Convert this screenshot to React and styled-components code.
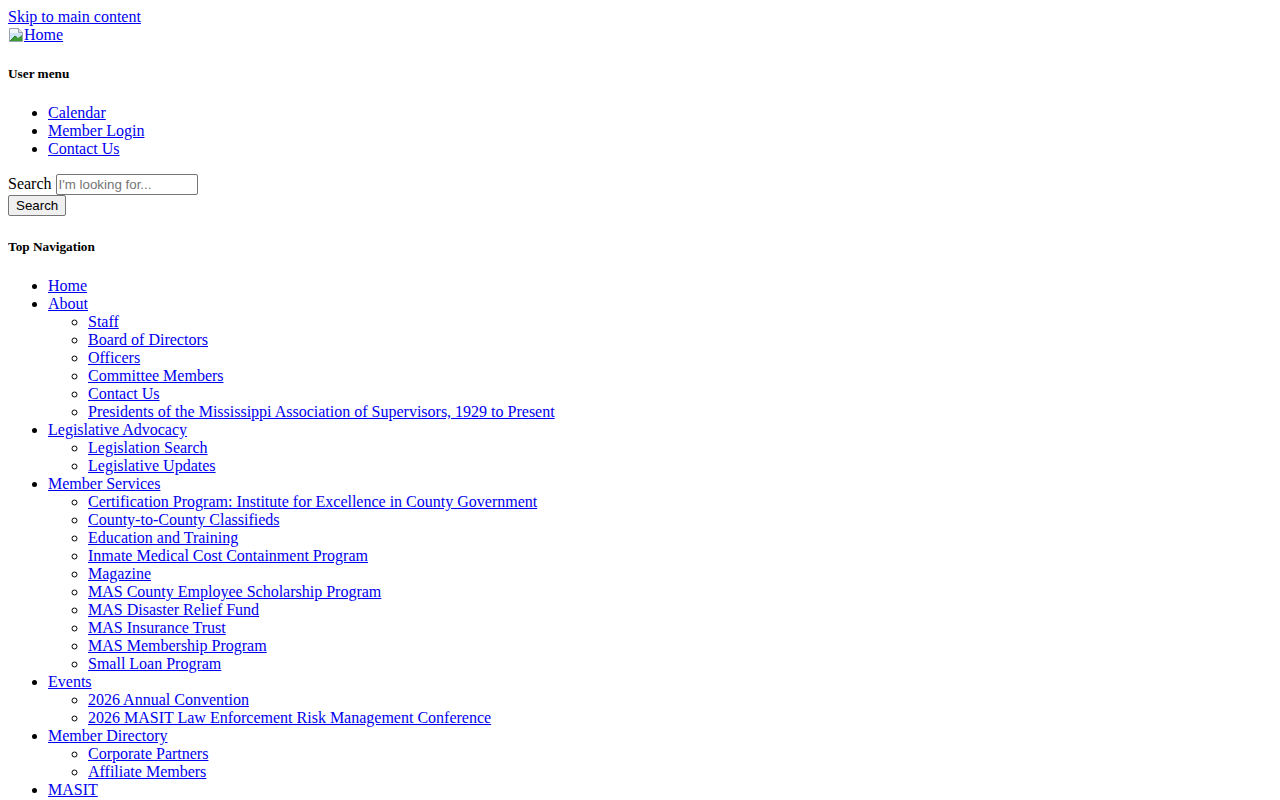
import React from "react";
import styled, { createGlobalStyle } from "styled-components";

const GlobalStyle = createGlobalStyle`
  body {
    margin: 8px;
    font-family: "Liberation Serif", "Times New Roman", serif;
    font-size: 16px;
    color: #000;
    background: #fff;
  }
`;

const Link = styled.a`
  color: #0000ee;
  text-decoration: underline;
  cursor: pointer;
`;

const LogoBlock = styled.div`
  height: 18px;
  line-height: 18px;
`;

const BrokenImage = styled.svg`
  width: 16px;
  height: 16px;
  vertical-align: text-bottom;
`;

const Block = styled.div``;

const MenuHeading = styled.h5`
  font-size: 13.28px;
  font-weight: bold;
  margin: 22.18px 0;
`;

const List = styled.ul`
  list-style-type: ${({ $nested }) => ($nested ? "circle" : "disc")};
  margin: ${({ $nested }) => ($nested ? "0" : "16px 0")};
  padding-left: 40px;
`;

const Item = styled.li``;

const SearchForm = styled.form`
  margin: 0;
`;

const SearchInput = styled.input`
  font-family: "Liberation Sans", Arial, sans-serif;
  font-size: 13.33px;
  width: 142px;
  height: 21px;
  box-sizing: border-box;
  padding: 1px 2px;
  border: 1px solid #767676;
  border-radius: 2px;
  vertical-align: baseline;
  &::placeholder {
    color: #757575;
  }
`;

const SearchButton = styled.button`
  font-family: "Liberation Sans", Arial, sans-serif;
  font-size: 13.33px;
  height: 21px;
  padding: 1px 7px;
  background: #efefef;
  border: 1px solid #767676;
  border-radius: 2px;
  color: #000;
`;

const nav = [
  { label: "Home" },
  {
    label: "About",
    children: [
      "Staff",
      "Board of Directors",
      "Officers",
      "Committee Members",
      "Contact Us",
      "Presidents of the Mississippi Association of Supervisors, 1929 to Present",
    ],
  },
  {
    label: "Legislative Advocacy",
    children: ["Legislation Search", "Legislative Updates"],
  },
  {
    label: "Member Services",
    children: [
      "Certification Program: Institute for Excellence in County Government",
      "County-to-County Classifieds",
      "Education and Training",
      "Inmate Medical Cost Containment Program",
      "Magazine",
      "MAS County Employee Scholarship Program",
      "MAS Disaster Relief Fund",
      "MAS Insurance Trust",
      "MAS Membership Program",
      "Small Loan Program",
    ],
  },
  {
    label: "Events",
    children: [
      "2026 Annual Convention",
      "2026 MASIT Law Enforcement Risk Management Conference",
    ],
  },
  {
    label: "Member Directory",
    children: ["Corporate Partners", "Affiliate Members"],
  },
  { label: "MASIT" },
];

const App = () => {
  return (
    <>
      <GlobalStyle />
      <Block>
        <Link href="#main">Skip to main content</Link>
      </Block>
      <LogoBlock>
        <Link href="#">
          <BrokenImage viewBox="0 0 16 16">
            <path d="M1.5 1.5h9l4 4v9h-13z" fill="#f4f6f8" stroke="#9aa3ad" />
            <path d="M10.5 1.5v4h4" fill="#dfe4ea" stroke="#9aa3ad" />
            <rect x="2" y="6" width="12" height="6" fill="#cfe3f6" />
            <path d="M2 14l5-5 3 2 4-3v6z" fill="#3d9a35" />
            <path d="M2 14l5-5 2 1.5" fill="none" stroke="#2a7a24" />
          </BrokenImage>
          Home
        </Link>
      </LogoBlock>
      <MenuHeading>User menu</MenuHeading>
      <List>
        <Item><Link href="#">Calendar</Link></Item>
        <Item><Link href="#">Member Login</Link></Item>
        <Item><Link href="#">Contact Us</Link></Item>
      </List>
      <SearchForm onSubmit={(e) => e.preventDefault()}>
        <label htmlFor="search">Search</label>{" "}
        <SearchInput id="search" type="text" placeholder="I'm looking for..." />
        <br />
        <SearchButton type="submit">Search</SearchButton>
      </SearchForm>
      <MenuHeading>Top Navigation</MenuHeading>
      <List>
        {nav.map((entry) => (
          <Item key={entry.label}>
            <Link href="#">{entry.label}</Link>
            {entry.children && (
              <List $nested>
                {entry.children.map((child) => (
                  <Item key={child}>
                    <Link href="#">{child}</Link>
                  </Item>
                ))}
              </List>
            )}
          </Item>
        ))}
      </List>
    </>
  );
};

export default App;
